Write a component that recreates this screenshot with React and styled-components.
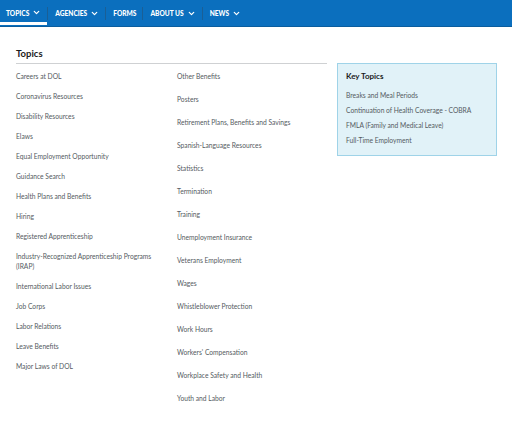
import React from "react";
import styled, { createGlobalStyle } from "styled-components";
import { ChevronDown } from "lucide-react";

const GlobalStyle = createGlobalStyle`
    body {
        margin: 0;
        background: #ffffff;
        font-family: "Lato", "Open Sans", sans-serif;
    }
`;

const NavBar = styled.nav`
    display: flex;
    align-items: stretch;
    height: 27px;
    background-color: #0b6fbe;
    border-bottom: 1px solid #0a5d9e;
    box-sizing: border-box;
`;

const NavItem = styled.div`
    display: flex;
    align-items: center;
    gap: 3px;
    padding: 0 6px 0 6px;
    color: #ffffff;
    font-size: 6.6px;
    font-weight: 900;
    text-transform: uppercase;
    box-shadow: ${(props) => (props.$active ? "inset 0 -3px 0 #ffffff" : "none")};
    margin-bottom: ${(props) => (props.$active ? "1px" : "0")};
`;

const NavDivider = styled.span`
    align-self: center;
    width: 1px;
    height: 13px;
    background-color: #1a5f96;
    margin-right: 1px;
`;

const Main = styled.main`
    display: flex;
    align-items: flex-start;
    gap: 10px;
    padding: 21px 0 0 16px;
`;

const TopicsSection = styled.section`
    width: 311px;
`;

const SectionTitle = styled.h2`
    margin: 0;
    padding-bottom: 3px;
    border-bottom: 1px solid #cfd1d3;
    font-size: 9.5px;
    line-height: 12px;
    font-weight: 700;
    color: #1b1b1b;
`;

const Columns = styled.div`
    display: grid;
    grid-template-columns: 161px 150px;
    margin-top: 7px;
`;

const LinkList = styled.ul`
    display: flex;
    flex-direction: column;
    gap: ${(props) => props.$gap}px;
    margin: 0;
    padding: 0;
    list-style: none;
`;

const LinkItem = styled.li`
    font-size: 6.7px;
    line-height: 10px;
    color: #555b62;
    padding-right: 16px;
`;

const KeyBox = styled.aside`
    width: 160px;
    margin-top: 15px;
    box-sizing: border-box;
    padding: 7px 8px 10px;
    background-color: #e1f2f8;
    border: 1px solid #9fd3e8;
`;

const KeyTitle = styled.h3`
    margin: 0 0 9px;
    font-size: 8px;
    line-height: 10px;
    font-weight: 700;
    color: #1b1b1b;
`;

const KeyList = styled.ul`
    display: flex;
    flex-direction: column;
    gap: 5px;
    margin: 0;
    padding: 0;
    list-style: none;
`;

const KeyItem = styled.li`
    font-size: 6.7px;
    line-height: 10px;
    color: #555b62;
`;

const navItems = [
    { label: "Topics", menu: true, active: true },
    { label: "Agencies", menu: true },
    { label: "Forms" },
    { label: "About Us", menu: true },
    { label: "News", menu: true },
];

const leftLinks = [
    "Careers at DOL",
    "Coronavirus Resources",
    "Disability Resources",
    "Elaws",
    "Equal Employment Opportunity",
    "Guidance Search",
    "Health Plans and Benefits",
    "Hiring",
    "Registered Apprenticeship",
    "Industry-Recognized Apprenticeship Programs (IRAP)",
    "International Labor Issues",
    "Job Corps",
    "Labor Relations",
    "Leave Benefits",
    "Major Laws of DOL",
];

const rightLinks = [
    "Other Benefits",
    "Posters",
    "Retirement Plans, Benefits and Savings",
    "Spanish-Language Resources",
    "Statistics",
    "Termination",
    "Training",
    "Unemployment Insurance",
    "Veterans Employment",
    "Wages",
    "Whistleblower Protection",
    "Work Hours",
    "Workers' Compensation",
    "Workplace Safety and Health",
    "Youth and Labor",
];

const keyTopics = [
    "Breaks and Meal Periods",
    "Continuation of Health Coverage - COBRA",
    "FMLA (Family and Medical Leave)",
    "Full-Time Employment",
];

export default function App() {
    return (
        <>
            <GlobalStyle />
            <NavBar>
                {navItems.map((item, i) => (
                    <React.Fragment key={item.label}>
                        {i > 0 && <NavDivider />}
                        <NavItem $active={item.active}>
                            {item.label}
                            {item.menu && <ChevronDown size={9} strokeWidth={3.2} />}
                        </NavItem>
                    </React.Fragment>
                ))}
            </NavBar>
            <Main>
                <TopicsSection>
                    <SectionTitle>Topics</SectionTitle>
                    <Columns>
                        <LinkList $gap={10}>
                            {leftLinks.map((l) => (
                                <LinkItem key={l}>{l}</LinkItem>
                            ))}
                        </LinkList>
                        <LinkList $gap={13}>
                            {rightLinks.map((l) => (
                                <LinkItem key={l}>{l}</LinkItem>
                            ))}
                        </LinkList>
                    </Columns>
                </TopicsSection>
                <KeyBox>
                    <KeyTitle>Key Topics</KeyTitle>
                    <KeyList>
                        {keyTopics.map((k) => (
                            <KeyItem key={k}>{k}</KeyItem>
                        ))}
                    </KeyList>
                </KeyBox>
            </Main>
        </>
    );
}
